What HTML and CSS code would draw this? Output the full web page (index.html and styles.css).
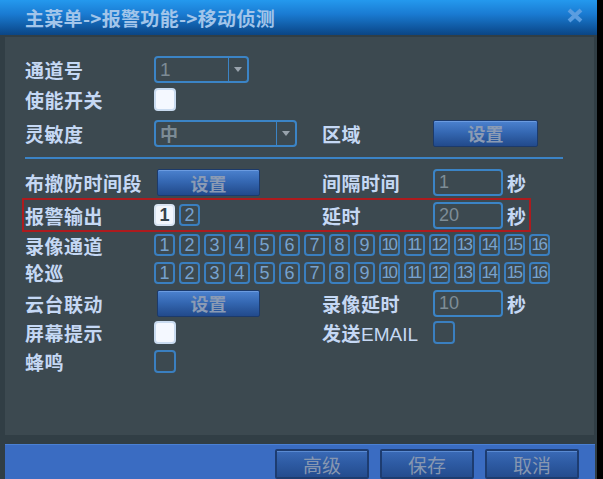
FILE: index.html
```html
<!DOCTYPE html>
<html lang="zh">
<head>
<meta charset="utf-8">
<title>移动侦测</title>
<link rel="stylesheet" href="styles.css">
</head>
<body>
<div class="screen">
  <div class="titlebar">
    <span class="title">主菜单-&gt;报警功能-&gt;移动侦测</span>
    <svg class="close" width="16" height="15" viewBox="0 0 16 15"><path d="M2 2 L14 13 M14 2 L2 13" stroke="#5b9de0" stroke-width="4"/></svg>
  </div>
  <div class="panel">
    <div class="row r1">
      <div class="lab">通道号</div>
      <div class="select s1"><span class="val">1</span><span class="arrow"></span></div>
    </div>
    <div class="row r2">
      <div class="lab">使能开关</div>
      <div class="cb on"></div>
    </div>
    <div class="row r3">
      <div class="lab">灵敏度</div>
      <div class="ctl"><div class="select s2"><span class="val cjk">中</span><span class="arrow"></span></div></div>
      <div class="lab2">区域</div>
      <div class="btn wide">设置</div>
    </div>
    <div class="sep"></div>
    <div class="row r4">
      <div class="lab">布撤防时间段</div>
      <div class="ctl"><div class="btn">设置</div></div>
      <div class="lab2">间隔时间</div>
      <div class="inp">1</div><span class="unit">秒</span>
    </div>
    <div class="row r5 alarm">
      <div class="lab">报警输出</div>
      <div class="ctl"><div class="nums"><span class="nb on">1</span><span class="nb">2</span></div></div>
      <div class="lab2">延时</div>
      <div class="inp">20</div><span class="unit">秒</span>
    </div>
    <div class="row r6">
      <div class="lab">录像通道</div>
      <div class="nums">
        <span class="nb">1</span><span class="nb">2</span><span class="nb">3</span><span class="nb">4</span><span class="nb">5</span><span class="nb">6</span><span class="nb">7</span><span class="nb">8</span><span class="nb">9</span><span class="nb dd">10</span><span class="nb dd">11</span><span class="nb dd">12</span><span class="nb dd">13</span><span class="nb dd">14</span><span class="nb dd">15</span><span class="nb dd">16</span>
      </div>
    </div>
    <div class="row r7">
      <div class="lab">轮巡</div>
      <div class="nums">
        <span class="nb">1</span><span class="nb">2</span><span class="nb">3</span><span class="nb">4</span><span class="nb">5</span><span class="nb">6</span><span class="nb">7</span><span class="nb">8</span><span class="nb">9</span><span class="nb dd">10</span><span class="nb dd">11</span><span class="nb dd">12</span><span class="nb dd">13</span><span class="nb dd">14</span><span class="nb dd">15</span><span class="nb dd">16</span>
      </div>
    </div>
    <div class="row r8">
      <div class="lab">云台联动</div>
      <div class="ctl"><div class="btn">设置</div></div>
      <div class="lab2">录像延时</div>
      <div class="inp">10</div><span class="unit">秒</span>
    </div>
    <div class="row r9">
      <div class="lab">屏幕提示</div>
      <div class="ctl"><div class="cb on"></div></div>
      <div class="lab2">发送<span class="latin">EMAIL</span></div>
      <div class="cb"></div>
    </div>
    <div class="row r10">
      <div class="lab">蜂鸣</div>
      <div class="cb"></div>
    </div>
  </div>
  <div class="footer">
    <div class="fbtn">高级</div>
    <div class="fbtn">保存</div>
    <div class="fbtn">取消</div>
  </div>
</div>
</body>
</html>
```
FILE: styles.css
```css
html { background: #000; }
body { margin: 0; font-family: "Liberation Sans", "Noto Sans CJK SC", sans-serif; }

.screen { width: 597px; height: 479px; background: #313e45; overflow: hidden; }

.titlebar {
  height: 35px; display: flex; align-items: center; padding-left: 25px; box-sizing: border-box;
  background: linear-gradient(#2499ee 0%, #1a7bd2 40%, #0f579f 80%, #0b4584 100%);
}
.title { font-family: "Noto Sans CJK SC", sans-serif; font-size: 19px; font-weight: bold; color: #a2c5ea; letter-spacing: 0.3px; }
.close { margin-left: auto; margin-right: 14px; margin-top: -4px; }

.panel {
  margin: 2px 0 0 5px; width: 589px; height: 398px; box-sizing: border-box;
  background: #3c4950; padding: 17px 0 0 20px;
}

.row { display: flex; align-items: center; }
.r1 { height: 30px; }
.r2 { height: 30px; }
.r3 { height: 38px; }
.r4 { height: 31px; }
.r5 { height: 34px; }
.r6 { height: 26px; }
.r7 { height: 29px; }
.r8 { height: 32px; }
.r9 { height: 27px; }
.r10 { height: 30px; }

.alarm {
  margin-left: -3px; padding-left: 1px; width: 509px; box-sizing: border-box;
  border: 2px solid #ad1b1e;
}

.lab, .lab2, .unit {
  font-family: "Noto Sans CJK SC", sans-serif; font-size: 19px; font-weight: bold;
  color: #c5d8f4; letter-spacing: 0.5px; white-space: nowrap;
}
.lab { width: 129px; flex: none; }
.lab2 { width: 111px; flex: none; }
.latin { font-family: "Liberation Sans", sans-serif; font-weight: normal; letter-spacing: 0; }
.ctl { width: 168px; flex: none; display: flex; align-items: center; }

.sep { width: 538px; height: 2px; background: #3b83c6; margin: 5px 0 8px; }

.select {
  height: 27px; border: 2px solid #3b84c6; border-radius: 4px; box-sizing: border-box;
  display: flex;
}
.s1 { width: 95px; }
.s2 { width: 143px; }
.val { flex: 1; color: #7c8b95; font-size: 19px; line-height: 23px; padding-left: 4px; }
.val.cjk { font-family: "Noto Sans CJK SC", sans-serif; font-weight: bold; font-size: 18px; }
.arrow { width: 18px; border-left: 1px solid #3b84c6; display: flex; align-items: center; justify-content: center; }
.arrow::after { content: ""; border-left: 4px solid transparent; border-right: 4px solid transparent; border-top: 5px solid #98a3ad; }

.btn {
  width: 103px; height: 27px; margin-left: 3px; box-sizing: border-box;
  border: 1px solid #1c3a6a; border-radius: 2px;
  background: linear-gradient(#4c82cf 0%, #3568b3 45%, #2a579c 75%, #224a8c 100%);
  box-shadow: inset 0 1px 0 #6b9be0;
  display: flex; align-items: center; justify-content: center;
  font-family: "Noto Sans CJK SC", sans-serif; font-size: 18px; font-weight: bold; color: #8b9bb4;
}
.btn.wide { width: 105px; margin-left: 0; }

.inp {
  width: 70px; height: 27px; box-sizing: border-box; border: 2px solid #3b84c6; border-radius: 4px;
  color: #7e8d97; font-size: 18px; line-height: 23px; padding-left: 4px;
}
.unit { margin-left: 4px; }

.nums { display: flex; gap: 4px; }
.nb {
  width: 21px; height: 22px; box-sizing: border-box; border: 2px solid #3a7fc0; border-radius: 4px;
  display: flex; align-items: center; justify-content: center;
  color: #77a2ce; font-size: 18px; line-height: 18px; overflow: hidden;
}
.nb.dd { letter-spacing: -2.5px; text-indent: -2px; font-size: 17px; }
.nb.on { background: #f2f6fd; border-color: #d8e4f3; color: #34424a; font-weight: bold; }

.cb { width: 22px; height: 23px; box-sizing: border-box; border: 2px solid #3a7fc0; border-radius: 4px; }
.cb.on { background: #f4f8ff; border-color: #c9dbf0; }

.footer {
  margin: 9px 0 0 5px; width: 590px; height: 35px; box-sizing: border-box;
  background: #3a6cc2; border-top: 1px solid #4a80d4;
  display: flex; justify-content: flex-end; gap: 11px; padding: 4px 16px 0 0;
}
.fbtn {
  width: 94px; height: 30px; box-sizing: border-box;
  border: 2px solid #1d3c70; border-radius: 2px;
  background: linear-gradient(#3a6ab7 0%, #2d5aa2 50%, #244c8e 100%);
  box-shadow: inset 0 1px 0 #5a8ad2;
  display: flex; align-items: center; justify-content: center;
  font-family: "Noto Sans CJK SC", sans-serif; font-size: 19px; color: #8797b1;
}
```
